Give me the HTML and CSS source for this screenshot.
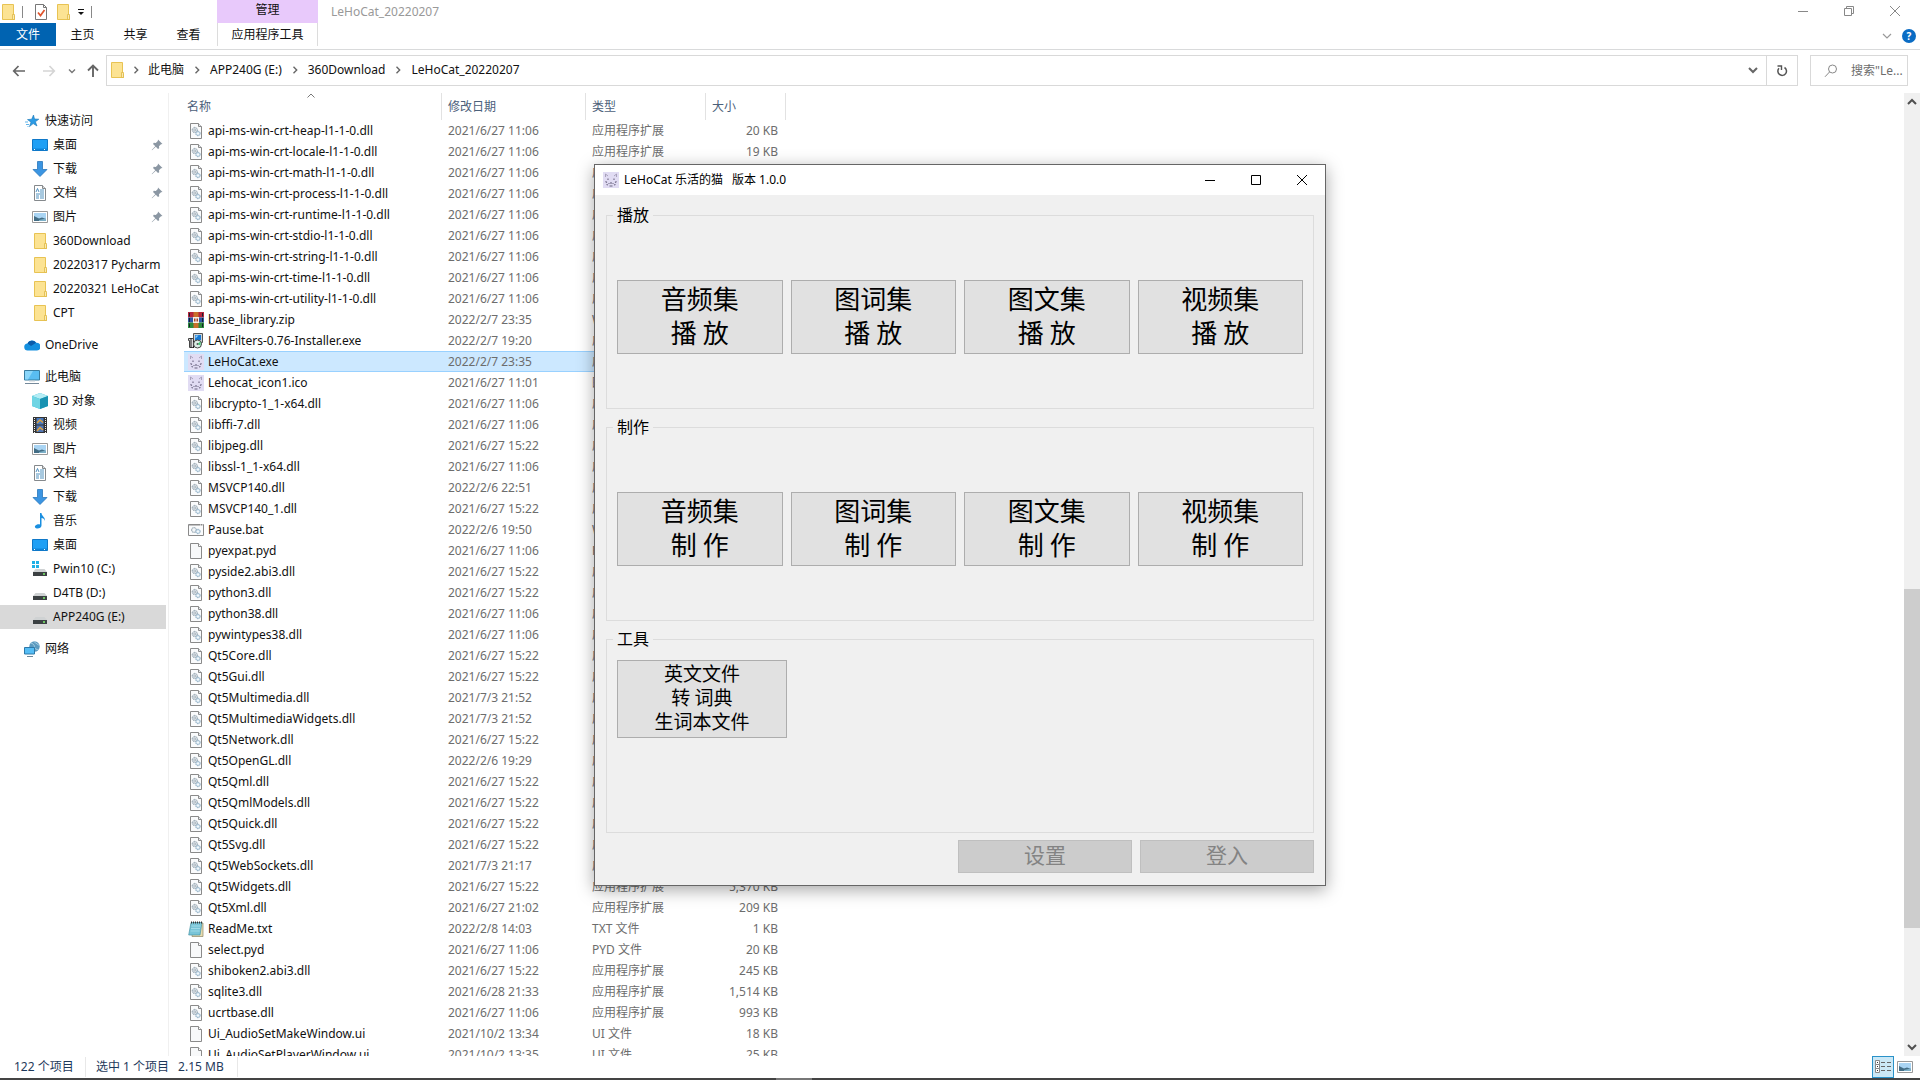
FILE: index.html
```html
<!DOCTYPE html>
<html lang="zh-CN">
<head>
<meta charset="utf-8">
<title>LeHoCat_20220207</title>
<link rel="stylesheet" href="styles.css">
</head>
<body>
<svg class="sprite" aria-hidden="true">
  <symbol id="dll" viewBox="0 0 16 16"><path d="M2.500.500h8l3 3v12h-11z" fill="#fafbfc" stroke="#8a8a8a"/><path d="M10.500.500v3h3" fill="#e4e8ec" stroke="#8a8a8a"/><circle cx="6.800" cy="7" r="2.600" fill="#dfe5ea" stroke="#7f929f" stroke-dasharray="1 .6"/><circle cx="6.800" cy="7" r="1" fill="#fff" stroke="#7f929f" stroke-width=".6"/><circle cx="10" cy="10.500" r="2.200" fill="#d3e4f0" stroke="#7e9fb8" stroke-dasharray="1 .6"/><circle cx="10" cy="10.500" r=".8" fill="#fff"/></symbol>
  <symbol id="file" viewBox="0 0 16 16"><path d="M2.500.500h8l3 3v12h-11z" fill="#f8f9fa" stroke="#8a8a8a"/><path d="M10.500.500v3h3" fill="#fff" stroke="#8a8a8a"/></symbol>
  <symbol id="bat" viewBox="0 0 16 16"><path d="M.5 2.500h15v11H.5z" fill="#fafbfc" stroke="#8a8a8a"/><path d="M1 3h14" stroke="#8a8a8a"/><path d="M12 3h3" stroke="#fff" stroke-dasharray="1 1"/><circle cx="6" cy="8" r="2.500" fill="#dfe5ea" stroke="#7f929f" stroke-dasharray="1 .6"/><circle cx="6" cy="8" r=".9" fill="#fff"/><circle cx="10" cy="9.500" r="2.200" fill="#d3e4f0" stroke="#7e9fb8" stroke-dasharray="1 .6"/><circle cx="10" cy="9.500" r=".8" fill="#fff"/></symbol>
  <symbol id="zip" viewBox="0 0 16 16"><path d="M0 0h16v5.500H0z" fill="#b5243c"/><path d="M0 5.500h16v5H0z" fill="#2e55a5"/><path d="M0 10.500h16V16H0z" fill="#2c8a3c"/><path d="M1.500 1v3.500M1.500 6v4M1.500 11.500V15M14.500 1v3.500M14.500 6v4M14.500 11.500V15" stroke="#16202e"/><path d="M5.500 0h5v16h-5z" fill="#c9702b"/><path d="M5 5h6v6H5z" fill="#f7efe6"/><path d="M6.500 6.500v3M8 6.500v3M9.500 6.500v3" stroke="#a8452b"/></symbol>
  <symbol id="setup" viewBox="0 0 16 16"><path d="M5.500.500h9v9h-9z" fill="#ced3d6" stroke="#555"/><path d="M7 2h6v5H7z" fill="#1779d4"/><path d="M7.500 2.500h3l-3 3z" fill="#8fd0fa"/><path d="M.5 5.500h5v9h-4v-7h-1z" fill="#ddd" stroke="#444"/><path d="M3 5v10M5.500 8v7" stroke="#222"/><circle cx="9.500" cy="11" r="4" fill="#dceee5" stroke="#444"/><path d="M9.500 11l3-2.500v4z" fill="#3ecb71"/><circle cx="9.500" cy="11" r="1" fill="#555"/></symbol>
  <symbol id="cat" viewBox="0 0 16 16"><path d="M0 0h16v16H0z" fill="#e1dcf3"/><path d="M2.500 5V2L5 4M11 4l2.500-2v3" fill="none" stroke="#a39bb5" stroke-width=".9"/><path d="M5 6.500v1.500M11 6.500v1.500M8 10v2M2.500 9.500l1.500 1M13.500 9.500l-1.500 1M3.500 12.500l1.500.5M12.500 12.500l-1.500.5M5.500 11.500h1M9.500 11.500h1M6.500 14h3" stroke="#6b6480" stroke-width="1.100"/></symbol>
  <symbol id="txt" viewBox="0 0 16 16"><path d="M5 2h10v13.500H4z" fill="#e8dcae" stroke="#8d8768" stroke-width=".7"/><path d="M3 1.500h11L12 14H.7z" fill="#79c5d8" stroke="#4c97a8" stroke-width=".7"/><path d="M3.500 5h9M3 7.500h9M2.600 10h9" stroke="#a9e0ec" stroke-width=".8"/><path d="M3 1.500h11" stroke="#333" stroke-width="2" stroke-dasharray="1 1"/></symbol>
  <symbol id="folder" viewBox="0 0 16 16"><path d="M2.500.500h11V12h1v3.500h-12z" fill="#fce393" stroke="#e8c353"/><path d="M12.500 10.500h2v5h-2z" fill="#fbeab0" stroke="#e0b945" stroke-width=".8"/></symbol>
  <symbol id="star" viewBox="0 0 16 16"><path d="M9.500 2l1 4 4.300.2-3.400 2.600 1.600 4.200-3.800-2.400-3.700 3 1.500-4.400L3.500 6.600l4.200-.4z" fill="#2a9be6" stroke="#1876b5" stroke-width=".6"/><path d="M1 9h3M2 11.500h3M3.500 13.500h1" stroke="#5fb4ea"/></symbol>
  <symbol id="desktop" viewBox="0 0 16 16"><path d="M.5 2.500h15v11H.5z" fill="#20a0f5" stroke="#0f78c8"/><path d="M1 11.500h14v1.500H1z" fill="#0f84d8"/><path d="M2 12.500h2M12 12.500h2" stroke="#fff" stroke-dasharray="1 1"/></symbol>
  <symbol id="down" viewBox="0 0 16 16"><path d="M5.500.500h5v8h4.500L8 15.500 1 8.500h4.500z" fill="#3b95e2" stroke="#2877bb" stroke-width=".8"/></symbol>
  <symbol id="doc" viewBox="0 0 16 16"><path d="M2.500.500h8l3 3v12h-11z" fill="#fff" stroke="#85898c"/><path d="M10.500.500v3h3" fill="#ddd" stroke="#85898c"/><path d="M4 7l1.500-3.500L7 7M8 5h4M8 7h4M4 9h8M4 11h3M8 11h4M4 13h3M8 13h4" stroke="#3d86b8" fill="none" stroke-width=".9"/></symbol>
  <symbol id="pic" viewBox="0 0 16 16"><path d="M.5 2.500h15v11H.5z" fill="#fff" stroke="#999"/><path d="M2 4h12v8H2z" fill="#a9d4f3"/><path d="M2 7l5 2.500 3-1 4 1.500v2H2z" fill="#436d85"/><path d="M7 11l7-1.500V12H7z" fill="#7cb0c8"/></symbol>
  <symbol id="pc" viewBox="0 0 16 16"><path d="M.5 1.500h15v9.500H.5z" fill="#59bdf2" stroke="#397c9f"/><path d="M1 2h8l-5 8.500H1z" fill="#8ad6fa"/><path d="M1 14.500h14" stroke="#75899a"/><path d="M5 12h6" stroke="#c5cdd3"/></symbol>
  <symbol id="cloud" viewBox="0 0 16 16"><path d="M4 13.500a3.500 3.500 0 0 1-.5-7 5 5 0 0 1 8.700-.7 3.800 3.800 0 0 1 .8 7.700z" fill="#1490df"/><path d="M3.500 6.500a5 5 0 0 1 8.500-.8L7 9z" fill="#0a5cab"/></symbol>
  <symbol id="cube" viewBox="0 0 16 16"><path d="M8 0l8 3v10l-8 3-8-3V3z" fill="#2fb6cf"/><path d="M8 0l8 3-8 3-8-3z" fill="#b5edf5"/><path d="M0 3l8 3v10l-8-3z" fill="#6fd5e4"/><path d="M8 6l8-3v10l-8 3z" fill="#1892b2"/></symbol>
  <symbol id="film" viewBox="0 0 16 16"><path d="M1 0h14v16H1z" fill="#333"/><path d="M4.500 1h7v6.500h-7z" fill="#4a7bc0"/><path d="M4.500 8.500h7V15h-7z" fill="#5076b5"/><path d="M5 6l3-3 3 2.500M5 14l3-3.500 3 2.500" stroke="#e0a23b" stroke-width="1.500" fill="none"/><path d="M2.500 1v15M13.500 1v15" stroke="#eee" stroke-dasharray="1 1"/></symbol>
  <symbol id="music" viewBox="0 0 16 16"><path d="M8 0h1.500c0 3 4 4 3.500 8-.5-2-2-3-3.500-3v7.500c0 2-2 3-4 3S2 14 3.500 12.500 7 11 8 11.500z" fill="#1a8fe0"/></symbol>
  <symbol id="drive" viewBox="0 0 16 16"><path d="M3.500 8h9L15 11H1z" fill="#cfd2d3"/><path d="M1 11h14v4H1z" fill="#3c4143"/><path d="M11 13h2" stroke="#7cf06b" stroke-width="1.500"/></symbol>
  <symbol id="windrive" viewBox="0 0 16 16"><use href="#drive"/><path d="M0 0h3v3H0zM4 0h3v3H4zM0 4h3v3H0zM4 4h3v3H4z" fill="#20b0e6"/></symbol>
  <symbol id="net" viewBox="0 0 16 16"><circle cx="10.500" cy="5.500" r="5.200" fill="#5c9abf"/><path d="M7 2c3 1 4 3 3 5l4 2M10 .5c2 2 4 3 5.500 4" stroke="#a8d0e4" fill="none"/><path d="M.5 6.500h10V13H.5z" fill="#55bdf5" stroke="#2d78a8"/><path d="M3 15.500h6" stroke="#6c8798"/></symbol>
  <symbol id="pin" viewBox="0 0 12 12"><path d="M7 .5l4.500 4.500-1.500.2-2 2 .2 2L7 10 4.800 7.700 1 11.300.7 11 4.300 7.200 2 5l.8-1.200 2 .2 2-2z" fill="#8b97a3"/></symbol>
  <symbol id="chev" viewBox="0 0 8 8"><path d="M2.500.800L5.700 4 2.500 7.200" fill="none" stroke="#666" stroke-width="1.400"/></symbol>
</svg>

<header class="titlebar">
  <div class="quick">
    <svg class="i16"><use href="#folder"/></svg>
    <span class="bar"></span>
    <button class="bare" aria-label="属性"><svg class="i16" viewBox="0 0 16 16"><path d="M2.500.500h8l3 3v12h-11z" fill="#fff" stroke="#777"/><path d="M10.500.500v3h3" fill="none" stroke="#777"/><path d="M5 8.500l2.500 3L11.500 6" fill="none" stroke="#e0542c" stroke-width="1.700"/></svg></button>
    <button class="bare" aria-label="新建文件夹"><svg class="i16"><use href="#folder"/></svg></button>
    <button class="bare" aria-label="自定义快速访问工具栏"><svg class="i8" viewBox="0 0 8 8"><path d="M1 1.500h6" stroke="#111"/><path d="M1 4h6L4 7z" fill="#111"/></svg></button>
    <span class="bar"></span>
  </div>
  <div class="context">管理</div>
  <h1 class="caption">LeHoCat_20220207</h1>
  <div class="winbtns">
    <button class="bare" aria-label="最小化"><svg viewBox="0 0 12 12"><path d="M1 6.500h10"/></svg></button>
    <button class="bare" aria-label="还原"><svg viewBox="0 0 12 12"><path d="M1.500 3.500h7v7h-7zM3.500 3V1.500h7v7H9"/></svg></button>
    <button class="bare" aria-label="关闭"><svg viewBox="0 0 12 12"><path d="M1 1l10 10M11 1L1 11"/></svg></button>
  </div>
</header>

<div class="ribbon">
  <button class="tab tab-file">文件</button>
  <button class="tab">主页</button>
  <button class="tab">共享</button>
  <button class="tab">查看</button>
  <button class="tab tab-tools">应用程序工具</button>
  <div class="ribbon-end">
    <button class="bare" aria-label="展开功能区"><svg class="i10" viewBox="0 0 10 10"><path d="M1 3l4 4 4-4" fill="none" stroke="#999" stroke-width="1.200"/></svg></button>
    <button class="help" aria-label="帮助">?</button>
  </div>
</div>

<div class="address">
  <div class="arrows">
    <button class="bare" aria-label="后退"><svg class="i14" viewBox="0 0 14 14"><path d="M13 7H2M6.500 2L1.700 7l4.800 5" fill="none" stroke="#666" stroke-width="1.700"/></svg></button>
    <button class="bare" aria-label="前进"><svg class="i14" viewBox="0 0 14 14"><path d="M1 7h11M7.500 2l4.800 5-4.800 5" fill="none" stroke="#d5d5d5" stroke-width="1.700"/></svg></button>
    <button class="bare" aria-label="最近位置"><svg class="i8" viewBox="0 0 8 8"><path d="M1 2.500l3 3 3-3" fill="none" stroke="#777" stroke-width="1.400"/></svg></button>
    <button class="bare" aria-label="上移"><svg class="i14" viewBox="0 0 14 14"><path d="M7 13V2M2 6.500l5-5 5 5" fill="none" stroke="#666" stroke-width="1.900"/></svg></button>
  </div>
  <nav class="path" aria-label="路径">
    <svg class="i16"><use href="#folder"/></svg>
    <svg class="i8"><use href="#chev"/></svg><a href="#">此电脑</a>
    <svg class="i8"><use href="#chev"/></svg><a href="#">APP240G (E:)</a>
    <svg class="i8"><use href="#chev"/></svg><a href="#">360Download</a>
    <svg class="i8"><use href="#chev"/></svg><a href="#">LeHoCat_20220207</a>
    <button class="bare push" aria-label="历史"><svg class="i10" viewBox="0 0 10 10"><path d="M1 3l4 4 4-4" fill="none" stroke="#666" stroke-width="2"/></svg></button>
    <button class="bare refresh" aria-label="刷新"><svg class="i12" viewBox="0 0 12 12"><path d="M8.500 2.500A4.300 4.300 0 1 1 3 3.200" fill="none" stroke="#555" stroke-width="1.500"/><path d="M1.500 1h4v4" fill="none" stroke="#555" stroke-width="1.400"/></svg></button>
  </nav>
  <label class="search">
    <svg class="i14" viewBox="0 0 14 14"><circle cx="8.500" cy="5" r="4" fill="none" stroke="#888"/><path d="M5.500 8L1 12.800" stroke="#888"/></svg>
    <input type="text" placeholder="搜索&quot;Le..." aria-label="搜索">
  </label>
</div>

<main class="work">
  <nav class="tree" aria-label="导航窗格">
    <div class="branch">
      <a class="root" href="#"><svg class="i16"><use href="#star"/></svg>快速访问</a>
      <a href="#"><svg class="i16"><use href="#desktop"/></svg>桌面<svg class="i12 push"><use href="#pin"/></svg></a>
      <a href="#"><svg class="i16"><use href="#down"/></svg>下载<svg class="i12 push"><use href="#pin"/></svg></a>
      <a href="#"><svg class="i16"><use href="#doc"/></svg>文档<svg class="i12 push"><use href="#pin"/></svg></a>
      <a href="#"><svg class="i16"><use href="#pic"/></svg>图片<svg class="i12 push"><use href="#pin"/></svg></a>
      <a href="#"><svg class="i16"><use href="#folder"/></svg>360Download</a>
      <a href="#"><svg class="i16"><use href="#folder"/></svg>20220317 Pycharm</a>
      <a href="#"><svg class="i16"><use href="#folder"/></svg>20220321 LeHoCat</a>
      <a href="#"><svg class="i16"><use href="#folder"/></svg>CPT</a>
    </div>
    <div class="branch">
      <a class="root" href="#"><svg class="i16"><use href="#cloud"/></svg>OneDrive</a>
    </div>
    <div class="branch">
      <a class="root" href="#"><svg class="i16"><use href="#pc"/></svg>此电脑</a>
      <a href="#"><svg class="i16"><use href="#cube"/></svg>3D 对象</a>
      <a href="#"><svg class="i16"><use href="#film"/></svg>视频</a>
      <a href="#"><svg class="i16"><use href="#pic"/></svg>图片</a>
      <a href="#"><svg class="i16"><use href="#doc"/></svg>文档</a>
      <a href="#"><svg class="i16"><use href="#down"/></svg>下载</a>
      <a href="#"><svg class="i16"><use href="#music"/></svg>音乐</a>
      <a href="#"><svg class="i16"><use href="#desktop"/></svg>桌面</a>
      <a href="#"><svg class="i16"><use href="#windrive"/></svg>Pwin10 (C:)</a>
      <a href="#"><svg class="i16"><use href="#drive"/></svg>D4TB (D:)</a>
      <a class="current" href="#"><svg class="i16"><use href="#drive"/></svg>APP240G (E:)</a>
    </div>
    <div class="branch">
      <a class="root" href="#"><svg class="i16"><use href="#net"/></svg>网络</a>
    </div>
  </nav>

  <div class="list">
    <table class="files">
      <colgroup><col class="c-name"><col class="c-date"><col class="c-type"><col class="c-size"></colgroup>
      <thead><tr><th>名称<svg class="sort" viewBox="0 0 8 5"><path d="M.5 4.500L4 1l3.500 3.500" fill="none" stroke="#777"/></svg></th><th>修改日期</th><th>类型</th><th>大小</th></tr></thead>
      <tbody>
        <tr><td><svg class="i16"><use href="#dll"/></svg>api-ms-win-crt-heap-l1-1-0.dll</td><td>2021/6/27 11:06</td><td>应用程序扩展</td><td>20 KB</td></tr>
        <tr><td><svg class="i16"><use href="#dll"/></svg>api-ms-win-crt-locale-l1-1-0.dll</td><td>2021/6/27 11:06</td><td>应用程序扩展</td><td>19 KB</td></tr>
        <tr><td><svg class="i16"><use href="#dll"/></svg>api-ms-win-crt-math-l1-1-0.dll</td><td>2021/6/27 11:06</td><td>应用程序扩展</td><td></td></tr>
        <tr><td><svg class="i16"><use href="#dll"/></svg>api-ms-win-crt-process-l1-1-0.dll</td><td>2021/6/27 11:06</td><td>应用程序扩展</td><td></td></tr>
        <tr><td><svg class="i16"><use href="#dll"/></svg>api-ms-win-crt-runtime-l1-1-0.dll</td><td>2021/6/27 11:06</td><td>应用程序扩展</td><td></td></tr>
        <tr><td><svg class="i16"><use href="#dll"/></svg>api-ms-win-crt-stdio-l1-1-0.dll</td><td>2021/6/27 11:06</td><td>应用程序扩展</td><td></td></tr>
        <tr><td><svg class="i16"><use href="#dll"/></svg>api-ms-win-crt-string-l1-1-0.dll</td><td>2021/6/27 11:06</td><td>应用程序扩展</td><td></td></tr>
        <tr><td><svg class="i16"><use href="#dll"/></svg>api-ms-win-crt-time-l1-1-0.dll</td><td>2021/6/27 11:06</td><td>应用程序扩展</td><td></td></tr>
        <tr><td><svg class="i16"><use href="#dll"/></svg>api-ms-win-crt-utility-l1-1-0.dll</td><td>2021/6/27 11:06</td><td>应用程序扩展</td><td></td></tr>
        <tr><td><svg class="i16"><use href="#zip"/></svg>base_library.zip</td><td>2022/2/7 23:35</td><td>WinRAR ZIP</td><td></td></tr>
        <tr><td><svg class="i16"><use href="#setup"/></svg>LAVFilters-0.76-Installer.exe</td><td>2022/2/7 19:20</td><td>应用程序</td><td></td></tr>
        <tr class="selected"><td><svg class="i16"><use href="#cat"/></svg>LeHoCat.exe</td><td>2022/2/7 23:35</td><td>应用程序</td><td></td></tr>
        <tr><td><svg class="i16"><use href="#cat"/></svg>Lehocat_icon1.ico</td><td>2021/6/27 11:01</td><td>图标</td><td></td></tr>
        <tr><td><svg class="i16"><use href="#dll"/></svg>libcrypto-1_1-x64.dll</td><td>2021/6/27 11:06</td><td>应用程序扩展</td><td></td></tr>
        <tr><td><svg class="i16"><use href="#dll"/></svg>libffi-7.dll</td><td>2021/6/27 11:06</td><td>应用程序扩展</td><td></td></tr>
        <tr><td><svg class="i16"><use href="#dll"/></svg>libjpeg.dll</td><td>2021/6/27 15:22</td><td>应用程序扩展</td><td></td></tr>
        <tr><td><svg class="i16"><use href="#dll"/></svg>libssl-1_1-x64.dll</td><td>2021/6/27 11:06</td><td>应用程序扩展</td><td></td></tr>
        <tr><td><svg class="i16"><use href="#dll"/></svg>MSVCP140.dll</td><td>2022/2/6 22:51</td><td>应用程序扩展</td><td></td></tr>
        <tr><td><svg class="i16"><use href="#dll"/></svg>MSVCP140_1.dll</td><td>2021/6/27 15:22</td><td>应用程序扩展</td><td></td></tr>
        <tr><td><svg class="i16"><use href="#bat"/></svg>Pause.bat</td><td>2022/2/6 19:50</td><td>Windows 批处理</td><td></td></tr>
        <tr><td><svg class="i16"><use href="#file"/></svg>pyexpat.pyd</td><td>2021/6/27 11:06</td><td>PYD 文件</td><td></td></tr>
        <tr><td><svg class="i16"><use href="#dll"/></svg>pyside2.abi3.dll</td><td>2021/6/27 15:22</td><td>应用程序扩展</td><td></td></tr>
        <tr><td><svg class="i16"><use href="#dll"/></svg>python3.dll</td><td>2021/6/27 15:22</td><td>应用程序扩展</td><td></td></tr>
        <tr><td><svg class="i16"><use href="#dll"/></svg>python38.dll</td><td>2021/6/27 11:06</td><td>应用程序扩展</td><td></td></tr>
        <tr><td><svg class="i16"><use href="#dll"/></svg>pywintypes38.dll</td><td>2021/6/27 11:06</td><td>应用程序扩展</td><td></td></tr>
        <tr><td><svg class="i16"><use href="#dll"/></svg>Qt5Core.dll</td><td>2021/6/27 15:22</td><td>应用程序扩展</td><td></td></tr>
        <tr><td><svg class="i16"><use href="#dll"/></svg>Qt5Gui.dll</td><td>2021/6/27 15:22</td><td>应用程序扩展</td><td></td></tr>
        <tr><td><svg class="i16"><use href="#dll"/></svg>Qt5Multimedia.dll</td><td>2021/7/3 21:52</td><td>应用程序扩展</td><td></td></tr>
        <tr><td><svg class="i16"><use href="#dll"/></svg>Qt5MultimediaWidgets.dll</td><td>2021/7/3 21:52</td><td>应用程序扩展</td><td></td></tr>
        <tr><td><svg class="i16"><use href="#dll"/></svg>Qt5Network.dll</td><td>2021/6/27 15:22</td><td>应用程序扩展</td><td></td></tr>
        <tr><td><svg class="i16"><use href="#dll"/></svg>Qt5OpenGL.dll</td><td>2022/2/6 19:29</td><td>应用程序扩展</td><td></td></tr>
        <tr><td><svg class="i16"><use href="#dll"/></svg>Qt5Qml.dll</td><td>2021/6/27 15:22</td><td>应用程序扩展</td><td></td></tr>
        <tr><td><svg class="i16"><use href="#dll"/></svg>Qt5QmlModels.dll</td><td>2021/6/27 15:22</td><td>应用程序扩展</td><td></td></tr>
        <tr><td><svg class="i16"><use href="#dll"/></svg>Qt5Quick.dll</td><td>2021/6/27 15:22</td><td>应用程序扩展</td><td></td></tr>
        <tr><td><svg class="i16"><use href="#dll"/></svg>Qt5Svg.dll</td><td>2021/6/27 15:22</td><td>应用程序扩展</td><td></td></tr>
        <tr><td><svg class="i16"><use href="#dll"/></svg>Qt5WebSockets.dll</td><td>2021/7/3 21:17</td><td>应用程序扩展</td><td></td></tr>
        <tr><td><svg class="i16"><use href="#dll"/></svg>Qt5Widgets.dll</td><td>2021/6/27 15:22</td><td>应用程序扩展</td><td>5,370 KB</td></tr>
        <tr><td><svg class="i16"><use href="#dll"/></svg>Qt5Xml.dll</td><td>2021/6/27 21:02</td><td>应用程序扩展</td><td>209 KB</td></tr>
        <tr><td><svg class="i16"><use href="#txt"/></svg>ReadMe.txt</td><td>2022/2/8 14:03</td><td>TXT 文件</td><td>1 KB</td></tr>
        <tr><td><svg class="i16"><use href="#file"/></svg>select.pyd</td><td>2021/6/27 11:06</td><td>PYD 文件</td><td>20 KB</td></tr>
        <tr><td><svg class="i16"><use href="#dll"/></svg>shiboken2.abi3.dll</td><td>2021/6/27 15:22</td><td>应用程序扩展</td><td>245 KB</td></tr>
        <tr><td><svg class="i16"><use href="#dll"/></svg>sqlite3.dll</td><td>2021/6/28 21:33</td><td>应用程序扩展</td><td>1,514 KB</td></tr>
        <tr><td><svg class="i16"><use href="#dll"/></svg>ucrtbase.dll</td><td>2021/6/27 11:06</td><td>应用程序扩展</td><td>993 KB</td></tr>
        <tr><td><svg class="i16"><use href="#file"/></svg>Ui_AudioSetMakeWindow.ui</td><td>2021/10/2 13:34</td><td>UI 文件</td><td>18 KB</td></tr>
        <tr><td><svg class="i16"><use href="#file"/></svg>Ui_AudioSetPlayerWindow.ui</td><td>2021/10/2 13:35</td><td>UI 文件</td><td>25 KB</td></tr>
      </tbody>
    </table>
  </div>

  <div class="scrollbar" aria-hidden="true">
    <svg class="i10" viewBox="0 0 10 10"><path d="M1 7l4-4 4 4" fill="none" stroke="#505050" stroke-width="2"/></svg>
    <div class="track"><div class="thumb"></div></div>
    <svg class="i10" viewBox="0 0 10 10"><path d="M1 3l4 4 4-4" fill="none" stroke="#505050" stroke-width="2"/></svg>
  </div>
</main>

<footer class="status">
  <span class="count">122 个项目</span>
  <span class="picked"><span>选中 1 个项目</span><span>2.15 MB</span></span>
  <div class="views">
    <button class="view view-on" aria-label="详细信息"><svg class="i16" viewBox="0 0 16 16"><path d="M.5 1.500h4v4h-4zM.5 5.500h4v4h-4zM.5 9.500h4v4h-4z" fill="#fff" stroke="#888"/><path d="M2 3.500h1M2 7.500h1M2 11.500h1" stroke="#333"/><path d="M6 3.500h4M12 3.500h4M6 7.500h4M12 7.500h4M6 11.500h4M12 11.500h4" stroke="#666"/></svg></button>
    <button class="view" aria-label="大图标"><svg class="i16"><use href="#pic"/></svg></button>
  </div>
</footer>
<div class="taskbar"><span class="task"></span></div>

<section class="dialog" role="dialog" aria-labelledby="dlg-title">
  <div class="dlg-bar">
    <svg class="i16"><use href="#cat"/></svg>
    <h2 id="dlg-title"><span>LeHoCat 乐活的猫</span><span>版本 1.0.0</span></h2>
    <div class="dlg-btns">
      <button class="bare" aria-label="最小化"><svg viewBox="0 0 12 12"><path d="M1 6.500h10"/></svg></button>
      <button class="bare" aria-label="最大化"><svg viewBox="0 0 12 12"><path d="M1.500 1.500h9v9h-9z"/></svg></button>
      <button class="bare" aria-label="关闭"><svg viewBox="0 0 12 12"><path d="M1 1l10 10M11 1L1 11"/></svg></button>
    </div>
  </div>
  <div class="dlg-body">
    <fieldset class="group">
      <legend>播放</legend>
      <div class="four">
        <button>音频集<br>播 放</button><button>图词集<br>播 放</button><button>图文集<br>播 放</button><button>视频集<br>播 放</button>
      </div>
    </fieldset>
    <fieldset class="group">
      <legend>制作</legend>
      <div class="four">
        <button>音频集<br>制 作</button><button>图词集<br>制 作</button><button>图文集<br>制 作</button><button>视频集<br>制 作</button>
      </div>
    </fieldset>
    <fieldset class="group">
      <legend>工具</legend>
      <div class="tools"><button>英文文件<br>转 词典<br>生词本文件</button></div>
    </fieldset>
    <div class="foot"><button disabled>设置</button><button disabled>登入</button></div>
  </div>
</section>
</body>
</html>
```
FILE: styles.css
```css
* { box-sizing: border-box; }

body {
  margin: 0;
  height: 100vh;
  display: flex;
  flex-direction: column;
  overflow: hidden;
  background: #fff;
  color: #111;
  font: 12px/20px "Noto Sans", "Noto Sans CJK SC", sans-serif;
}

button, input { font: inherit; color: inherit; margin: 0; }
a { color: inherit; text-decoration: none; }
h1, h2 { margin: 0; font: inherit; }
svg { display: block; flex: none; }

.sprite { position: absolute; width: 0; height: 0; }
.i8 { width: 8px; height: 8px; }
.i10 { width: 10px; height: 10px; }
.i12 { width: 12px; height: 12px; }
.i14 { width: 14px; height: 14px; }
.i16 { width: 16px; height: 16px; }
.push { margin-left: auto; }
.bare { display: flex; align-items: center; justify-content: center; padding: 0; border: 0; background: none; }

/* title bar */
.titlebar { display: flex; height: 23px; flex: none; }
.quick { display: flex; align-items: center; gap: 6px; width: 217px; }
.quick .bar { width: 1px; height: 12px; background: #888; }
.quick .bar + .bare { margin-left: 4px; }
.context { width: 101px; background: #e8c9fb; text-align: center; line-height: 19px; }
.caption { margin-left: 13px; line-height: 23px; color: #999; }
.winbtns { display: flex; margin-left: auto; padding-right: 2px; }
.winbtns .bare { width: 46px; height: 21px; }
.winbtns svg { width: 12px; height: 12px; fill: none; stroke: #888; }

/* ribbon tabs */
.ribbon { display: flex; height: 27px; flex: none; border-bottom: 1px solid #d9dadb; }
.tab { width: 53px; height: 23px; padding: 0; border: 0; background: none; line-height: 23px; }
.tab-file { width: 56px; background: #0063b1; color: #fff; }
.tab-tools { width: 101px; margin-left: 2px; border: solid #dcdcdc; border-width: 0 1px; }
.ribbon-end { display: flex; align-items: center; gap: 10px; margin-left: auto; padding-right: 4px; }
.help { width: 14px; height: 14px; padding: 0; border: 0; border-radius: 50%; background: #0a6cc4; color: #fff; font-weight: 700; font-size: 10px; line-height: 14px; }

/* address row */
.address { display: flex; height: 43px; flex: none; padding: 5px 12px 7px; }
.arrows { display: flex; align-items: center; width: 94px; gap: 16px; }
.arrows .i8 { margin-left: -4px; }
.arrows .bare:last-child { margin-left: -6px; }
.path { display: flex; flex: 1; align-items: center; padding: 0 0 2px 2px; border: 1px solid #d9d9d9; }
.path > .i8 { margin: 0 9px; }
.path > .i16 + .i8 { margin: 0 8px 0 7px; }
.refresh { width: 31px; height: 31px; margin: 0 0 -2px 8px; border-left: 1px solid #d9d9d9; }
.search { display: flex; align-items: center; gap: 13px; width: 98px; margin-left: 12px; padding-left: 13px; border: 1px solid #d9d9d9; }
.search input { width: 56px; padding: 0; border: 0; background: none; outline: 0; }
.search input::placeholder { color: #6d6d6d; opacity: 1; }

/* work area */
.work { display: flex; flex: 1; min-height: 0; }
.tree { width: 169px; flex: none; padding-top: 16px; border-right: 1px solid #f0f0f0; }
.branch { margin-bottom: 8px; }
.tree a { display: flex; align-items: center; gap: 5px; height: 24px; padding: 0 3px 0 32px; margin-right: 2px; white-space: nowrap; }
.tree .root { padding-left: 24px; }
.tree .current { background: #d9d9d9; }
.list { flex: 1; overflow: hidden; padding-left: 15px; }
.files { width: 602px; table-layout: fixed; border-collapse: separate; border-spacing: 0; color: #6d6d6d; }
.c-name { width: 258px; }
.c-date { width: 144px; }
.c-type { width: 120px; }
.c-size { width: 80px; }
.files th { position: relative; height: 27px; padding: 0 6px; border-right: 1px solid #e2e2e2; text-align: left; font-weight: 400; color: #4c607a; }
.files th:first-child { padding-left: 3px; }
.sort { position: absolute; top: 0; left: 48%; width: 8px; height: 5px; }
.files td { height: 21px; padding: 0 6px; line-height: 19px; white-space: nowrap; overflow: hidden; }
.files td:first-child { display: flex; align-items: center; gap: 4px; padding-left: 4px; color: #111; }
.files td:last-child { text-align: right; padding-right: 8px; }
.selected td { background: #cce8ff; border: solid #99d1ff; border-width: 1px 0; }

.scrollbar { display: flex; flex-direction: column; align-items: center; width: 16px; padding: 4px 0; background: #f0f0f0; }
.track { display: flex; flex: 1; flex-direction: column; align-self: stretch; padding: 482px 0 114px; }
.thumb { flex: 1; background: #cdcdcd; }

/* status bar */
.status { display: flex; align-items: center; height: 22px; flex: none; padding-left: 14px; color: #1e395b; }
.count { width: 72px; border-right: 1px solid #e8e8e8; }
.picked { display: flex; gap: 9px; width: 152px; padding-left: 10px; border-right: 1px solid #e8e8e8; white-space: nowrap; }
.views { display: flex; margin-left: auto; padding-right: 4px; }
.view { display: flex; align-items: center; justify-content: center; width: 22px; height: 22px; padding: 0; border: 0; background: none; }
.view-on { border: 1px solid #2a92c9; background: #cbe8f6; }
.taskbar { display: flex; height: 2px; flex: none; padding-left: 776px; background: #444; }
.task { width: 36px; background: #777; }

/* floating application window */
.dialog {
  position: absolute;
  left: 594px;
  top: 164px;
  width: 732px;
  border: 1px solid #666;
  background: #f0f0f0;
  box-shadow: 0 4px 16px rgba(0, 0, 0, .35);
  color: #000;
}
.dlg-bar { display: flex; align-items: center; gap: 5px; height: 30px; padding-left: 8px; background: #fff; }
.dlg-bar h2 { display: flex; gap: 9px; }
.dlg-btns { display: flex; align-self: stretch; margin-left: auto; }
.dlg-btns .bare { width: 46px; }
.dlg-btns svg { width: 12px; height: 12px; fill: none; stroke: #000; }
.dlg-body { display: grid; gap: 7px; padding: 9px 11px 12px; font-family: "Noto Sans CJK SC", sans-serif; }
.group { display: flex; flex-direction: column; height: 205px; min-width: 0; margin: 0; padding: 0 10px; border: 1px solid #dcdcdc; }
.group legend { margin-left: -4px; padding: 0 4px 2px; font-size: 16px; line-height: 20px; }
.four { display: grid; flex: 1; grid-template-columns: repeat(4, 1fr); gap: 8px; align-items: center; }
.group button { padding: 0 0 4px; border: 1px solid #adadad; background: #e1e1e1; }
.four button { height: 74px; font-size: 26px; line-height: 34px; }
.tools { padding-top: 10px; }
.tools button { width: 170px; height: 78px; font-size: 19px; line-height: 24px; }
.foot { display: grid; grid-template-columns: 174px 174px; justify-content: end; gap: 8px; }
.foot button { height: 33px; padding: 0 0 4px; border: 1px solid #bfbfbf; background: #ccc; color: #838383; font-size: 21px; line-height: 27px; }
```
